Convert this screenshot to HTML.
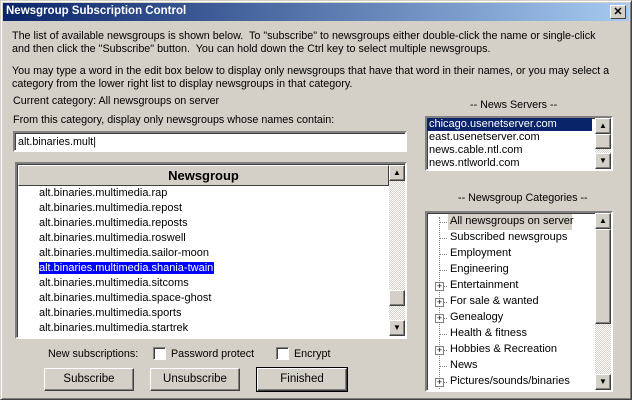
<!DOCTYPE html>
<html><head><style>
*{margin:0;padding:0;box-sizing:border-box}
body{width:632px;height:400px;background:#d4d0c8;font-family:"Liberation Sans",sans-serif;font-size:10.75px;color:#000;position:relative;overflow:hidden}
.a{position:absolute;white-space:nowrap}
.win{position:absolute;left:0;top:0;width:632px;height:400px;border:1px solid;border-color:#d4d0c8 #404040 #404040 #d4d0c8;box-shadow:inset 1px 1px #fff,inset -1px -1px #808080}
.title{position:absolute;left:3px;top:3px;width:626px;height:18px;background:linear-gradient(90deg,#0a246a,#a6caf0);color:#fff;font-weight:bold;font-size:11.5px;padding:2px 3px}
.xb{position:absolute;left:610px;top:5px;width:16px;height:14px;background:#d4d0c8;border:1px solid;border-color:#fff #404040 #404040 #fff;font-size:11px;text-align:center;line-height:12px;font-weight:bold}
.sunk{position:absolute;background:#fff;border:2px solid;border-color:#808080 #fff #fff #808080;box-shadow:inset 1px 1px #404040}
.sb{position:absolute;width:16px;background:repeating-conic-gradient(#d4d0c8 0 25%,#fff 0 50%) 0 0/2px 2px}
.btn{position:absolute;background:#d4d0c8;border:1px solid;border-color:#fff #404040 #404040 #fff;box-shadow:inset -1px -1px #808080;text-align:center;font-size:11.5px}
.row{position:absolute;left:22px;font-size:11px}
.cb{position:absolute;width:13px;height:13px;background:#fff;border:1px solid;border-color:#808080 #fff #fff #808080;box-shadow:inset 1px 1px #404040}
.tr{position:absolute;left:23px;font-size:11px}
.pl{position:absolute;left:8px;width:9px;height:9px;border:1px solid #808080;background:#fff;font-size:9px;line-height:7px;text-align:center}
.dt{position:absolute;left:12px;width:8px;border-top:1px dotted #808080}
</style></head><body>
<div class="win"></div>
<div class="title">Newsgroup Subscription Control</div>
<div class="xb">✕</div>
<div class="a" style="left:12px;top:30px">The list of available newsgroups is shown below.&nbsp; To "subscribe" to newsgroups either double-click the name or single-click</div>
<div class="a" style="left:12px;top:43px">and then click the "Subscribe" button.&nbsp; You can hold down the Ctrl key to select multiple newsgroups.</div>
<div class="a" style="left:12px;top:65px">You may type a word in the edit box below to display only newsgroups that have that word in their names, or you may select a</div>
<div class="a" style="left:12px;top:78px">category from the lower right list to display newsgroups in that category.</div>
<div class="a" style="left:13px;top:95px">Current category: All newsgroups on server</div>
<div class="a" style="left:13px;top:114px">From this category, display only newsgroups whose names contain:</div>
<div class="sunk" style="left:13px;top:131px;width:394px;height:21px"><span class="a" style="left:3px;top:3px">alt.binaries.mult|</span></div>

<div class="sunk" style="left:15px;top:162px;width:392px;height:177px;overflow:hidden">
 <div class="a" style="left:1px;top:1px;width:371px;height:21px;background:#d4d0c8;border:1px solid;border-color:#fff #404040 #404040 #fff;text-align:center;font-weight:bold;font-size:13px;line-height:19px">Newsgroup</div>
 <div class="sb" style="left:372px;top:1px;height:171px"></div>
 <div class="btn" style="left:372px;top:1px;width:16px;height:16px;font-size:8px;line-height:14px">▲</div>
 <div class="btn" style="left:372px;top:126px;width:16px;height:16px"></div>
 <div class="btn" style="left:372px;top:156px;width:16px;height:16px;font-size:8px;line-height:14px">▼</div>
 <div class="row" style="top:23px">alt.binaries.multimedia.rap</div>
 <div class="row" style="top:38px">alt.binaries.multimedia.repost</div>
 <div class="row" style="top:53px">alt.binaries.multimedia.reposts</div>
 <div class="row" style="top:68px">alt.binaries.multimedia.roswell</div>
 <div class="row" style="top:83px">alt.binaries.multimedia.sailor-moon</div>
 <div class="row" style="top:98px;background:#0000ff;color:#fff;padding-right:1px">alt.binaries.multimedia.shania-twain</div>
 <div class="row" style="top:113px">alt.binaries.multimedia.sitcoms</div>
 <div class="row" style="top:128px">alt.binaries.multimedia.space-ghost</div>
 <div class="row" style="top:143px">alt.binaries.multimedia.sports</div>
 <div class="row" style="top:158px">alt.binaries.multimedia.startrek</div>
</div>

<div class="a" style="left:48px;top:348px">New subscriptions:</div>
<div class="cb" style="left:153px;top:347px"></div>
<div class="a" style="left:171px;top:348px">Password protect</div>
<div class="cb" style="left:276px;top:347px"></div>
<div class="a" style="left:294px;top:348px">Encrypt</div>
<div class="btn" style="left:44px;top:368px;width:90px;height:23px;line-height:21px">Subscribe</div>
<div class="btn" style="left:150px;top:368px;width:90px;height:23px;line-height:21px">Unsubscribe</div>
<div class="btn" style="left:257px;top:368px;width:90px;height:23px;line-height:21px;outline:1px solid #000">Finished</div>

<div class="a" style="left:470px;top:99px">-- News Servers --</div>
<div class="sunk" style="left:425px;top:116px;width:188px;height:55px;overflow:hidden">
 <div class="a" style="left:0;top:0;width:165px;height:13px;background:#0a246a"></div>
 <div class="a" style="left:2px;top:0;color:#fff;font-size:11px">chicago.usenetserver.com</div>
 <div class="a" style="left:2px;top:13px;font-size:11px">east.usenetserver.com</div>
 <div class="a" style="left:2px;top:26px;font-size:11px">news.cable.ntl.com</div>
 <div class="a" style="left:2px;top:39px;font-size:11px">news.ntlworld.com</div>
 <div class="sb" style="left:168px;top:0;height:51px"></div>
 <div class="btn" style="left:168px;top:0;width:16px;height:16px;font-size:8px;line-height:14px">▲</div>
 <div class="btn" style="left:168px;top:16px;width:16px;height:15px"></div>
 <div class="btn" style="left:168px;top:35px;width:16px;height:16px;font-size:8px;line-height:14px">▼</div>
</div>

<div class="a" style="left:458px;top:192px">-- Newsgroup Categories --</div>
<div class="sunk" style="left:425px;top:211px;width:188px;height:181px;overflow:hidden">
 <div class="a" style="left:12px;top:4px;height:172px;border-left:1px dotted #808080"></div>
 <div class="a" style="left:21px;top:1px;width:124px;height:16px;background:#d4d0c8"></div>
 <div class="dt" style="top:9px"></div><div class="tr" style="top:2px">All newsgroups on server</div>
 <div class="dt" style="top:25px"></div><div class="tr" style="top:18px">Subscribed newsgroups</div>
 <div class="dt" style="top:41px"></div><div class="tr" style="top:34px">Employment</div>
 <div class="dt" style="top:57px"></div><div class="tr" style="top:50px">Engineering</div>
 <div class="dt" style="top:73px"></div><div class="pl" style="top:69px">+</div><div class="tr" style="top:66px">Entertainment</div>
 <div class="dt" style="top:89px"></div><div class="pl" style="top:85px">+</div><div class="tr" style="top:82px">For sale &amp; wanted</div>
 <div class="dt" style="top:105px"></div><div class="pl" style="top:101px">+</div><div class="tr" style="top:98px">Genealogy</div>
 <div class="dt" style="top:121px"></div><div class="tr" style="top:114px">Health &amp; fitness</div>
 <div class="dt" style="top:137px"></div><div class="pl" style="top:133px">+</div><div class="tr" style="top:130px">Hobbies &amp; Recreation</div>
 <div class="dt" style="top:153px"></div><div class="tr" style="top:146px">News</div>
 <div class="dt" style="top:169px"></div><div class="pl" style="top:165px">+</div><div class="tr" style="top:162px">Pictures/sounds/binaries</div>
 <div class="sb" style="left:168px;top:0;height:177px"></div>
 <div class="btn" style="left:168px;top:0;width:16px;height:16px;font-size:8px;line-height:14px">▲</div>
 <div class="btn" style="left:168px;top:16px;width:16px;height:95px"></div>
 <div class="btn" style="left:168px;top:161px;width:16px;height:16px;font-size:8px;line-height:14px">▼</div>
</div>
</body></html>
